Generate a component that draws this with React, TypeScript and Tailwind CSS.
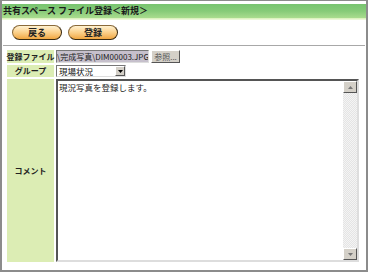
import React from "react";

const jp = { fontFamily: '"Noto Sans CJK JP", "Liberation Sans", sans-serif' };

const PillButton = ({ label }: { label: string }) => (
  <button
    className="flex h-[15px] w-[50px] items-center justify-center rounded-full border border-[#8a6a3a] border-b-[#3a2a10] border-r-[#3a2a10] bg-gradient-to-b from-[#fff1cf] via-[#fbd08a] to-[#f0a63e] text-[9px] font-bold leading-none text-[#222]"
    style={jp}
  >
    {label}
  </button>
);

export default function App() {
  return (
    <div className="h-[272px] w-[368px] bg-white" style={jp}>
      <div className="flex h-full flex-col border-2 border-t border-[#8c8c8c]">
        {/* title bar */}
        <div className="mt-[3px] h-[14px] whitespace-nowrap bg-gradient-to-b from-[#78c470] via-[#86cb78] to-[#a9dc8e] pl-[1px] text-[9px] font-bold leading-[14px] text-[#1a1a1a]">
          共有スペース ファイル登録＜新規＞
        </div>
        <div className="h-[2px] bg-gradient-to-b from-[#d6efb4] to-[#f4fbe4]" />

        {/* buttons */}
        <div className="mt-[5px] flex gap-[6px] pl-[10px]">
          <PillButton label="戻る" />
          <PillButton label="登録" />
        </div>
        <div className="mx-[1px] mt-[5px] h-[1px] bg-[#a8a8a8]" />

        {/* form */}
        <div className="mt-[4px] grid flex-1 grid-cols-[47px_1fr] grid-rows-[13px_12px_1fr] gap-x-[2px] gap-y-[2px] pb-[8px] pl-[5px] pr-[7px] text-[8px]">
          <div className="flex items-center justify-center whitespace-nowrap bg-[#dcedb4] font-bold leading-none text-[#222]">
            登録ファイル
          </div>
          <div className="flex items-center gap-[2px]">
            <div className="flex h-[13px] w-[93px] items-center overflow-hidden whitespace-nowrap border border-[#777] border-b-[#ddd] border-r-[#ddd] bg-[#c6c0cc] text-[8px] leading-none text-[#222]">
              \完成写真\DIM00003.JPG
            </div>
            <div className="flex h-[13px] w-[29px] items-center justify-center whitespace-nowrap border border-[#fff] border-b-[#555] border-r-[#555] bg-[#d4d0c8] text-[8px] leading-none text-[#555]">
              参照...
            </div>
          </div>

          <div className="flex items-center justify-center whitespace-nowrap bg-[#dcedb4] font-bold leading-none text-[#222]">
            グループ
          </div>
          <div className="flex items-center">
            <div className="flex h-[12px] w-[70px] items-center justify-between border border-[#777] border-b-[#ddd] border-r-[#ddd] bg-white pl-[2px] text-[8.5px] leading-none text-[#111]">
              <span>現場状況</span>
              <span className="flex h-[10px] w-[10px] items-center justify-center border border-[#fff] border-b-[#555] border-r-[#555] bg-[#d4d0c8]">
                <svg width="5" height="3" viewBox="0 0 5 3">
                  <path d="M0 0H5L2.5 3Z" fill="#000" />
                </svg>
              </span>
            </div>
          </div>

          <div className="flex items-center justify-center whitespace-nowrap bg-[#dcedb4] font-bold leading-none text-[#222]">
            コメント
          </div>
          <div className="flex border-2 border-[#555] border-b-[#ddd] border-r-[#ddd] bg-white">
            <div className="flex-1 pl-[1px] pt-[2px] text-[8.5px] leading-none text-[#222]">
              現況写真を登録します。
            </div>
            <div className="flex w-[14px] flex-col bg-[repeating-conic-gradient(#e4e4e4_0_25%,#f4f4f4_0_50%)] bg-[length:2px_2px]">
              <div className="flex h-[12px] w-[14px] items-center justify-center border border-[#fff] border-b-[#555] border-r-[#555] bg-[#d4d0c8]">
                <svg width="5" height="3" viewBox="0 0 5 3">
                  <path d="M0 3H5L2.5 0Z" fill="#777" />
                </svg>
              </div>
              <div className="flex-1" />
              <div className="flex h-[12px] w-[14px] items-center justify-center border border-[#fff] border-b-[#555] border-r-[#555] bg-[#d4d0c8]">
                <svg width="5" height="3" viewBox="0 0 5 3">
                  <path d="M0 0H5L2.5 3Z" fill="#777" />
                </svg>
              </div>
            </div>
          </div>
        </div>
      </div>
    </div>
  );
}
